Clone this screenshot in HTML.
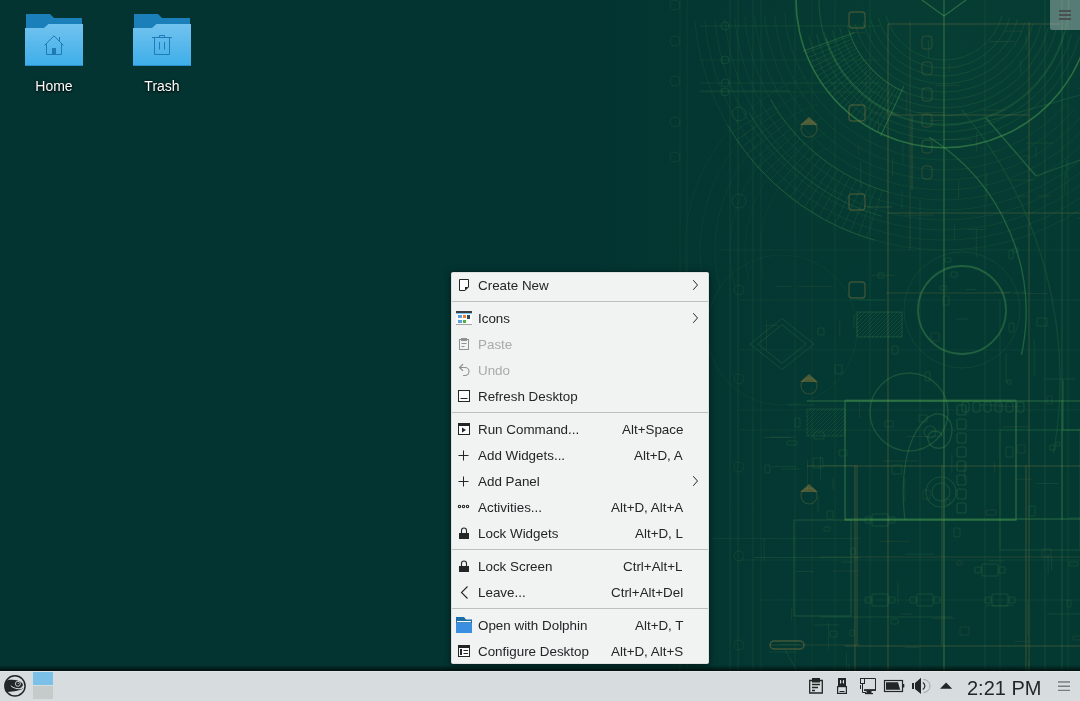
<!DOCTYPE html>
<html><head><meta charset="utf-8">
<style>
*{margin:0;padding:0;box-sizing:border-box}
html,body{width:1080px;height:701px;overflow:hidden;background:#033431;font-family:"Liberation Sans",sans-serif;-webkit-font-smoothing:antialiased}
.t,.k,.lbl,#clock{will-change:transform}
.abs{position:absolute;left:0;top:0}
.lbl{position:absolute;width:100px;text-align:center;color:#fcfcfc;font-size:14px;letter-spacing:0px;white-space:nowrap;text-shadow:0 1px 2px rgba(0,0,0,.95),0 0 3px rgba(0,0,0,.6)}
#menu{position:absolute;left:451px;top:272px;width:258px;height:392px;background:#f1f2f2;border-radius:2px;
 box-shadow:inset 0 0 0 1px rgba(0,0,0,.08),0 1px 7px rgba(0,0,0,.55),0 0 1px rgba(0,0,0,.4)}
.t,.k{position:absolute;font-size:13.4px;color:#232627;white-space:nowrap;line-height:16px}
.k{text-align:right}
.dis{color:#a8aaab}
.sep{position:absolute;left:1px;width:256px;height:1px;background:#bdbfc0}
#panel{position:absolute;left:0;top:671px;width:1080px;height:30px;background:#d7dcde}
#clock{position:absolute;left:967px;top:676.5px;font-size:20px;color:#232627;white-space:nowrap;line-height:22px}
</style></head><body>
<svg class="abs" width="1080" height="671" viewBox="0 0 1080 671">
 <defs>
  <linearGradient id="wg" x1="0" y1="0" x2="1" y2="0">
   <stop offset="0" stop-color="#053a33" stop-opacity="0"/>
   <stop offset="0.55" stop-color="#053a33" stop-opacity="0"/>
   <stop offset="0.75" stop-color="#043832" stop-opacity="1"/>
   <stop offset="1" stop-color="#043932" stop-opacity="1"/>
  </linearGradient>
  <radialGradient id="rg" cx="944" cy="60" r="240" gradientUnits="userSpaceOnUse">
   <stop offset="0" stop-color="#2a7a40" stop-opacity="0.08"/>
   <stop offset="1" stop-color="#2a7a40" stop-opacity="0"/>
  </radialGradient>
  <filter id="soft" x="0" y="0" width="1080" height="671" filterUnits="userSpaceOnUse"><feGaussianBlur stdDeviation="0.45"/></filter>
 </defs>
 <rect width="1080" height="671" fill="#033431"/>
 <rect width="1080" height="671" fill="url(#wg)"/>
 <rect width="1080" height="671" fill="url(#rg)"/>
<g filter="url(#soft)">
<path d="M1002.0 15.5 A60 60 0 0 1 886.0 15.5" fill="none" stroke="#52a552" stroke-opacity="0.15" stroke-width="1"/>
<path d="M1009.7 17.6 A68 68 0 0 1 878.3 17.6" fill="none" stroke="#52a552" stroke-opacity="0.15" stroke-width="1"/>
<path d="M1017.4 19.7 A76 76 0 0 1 870.6 19.7" fill="none" stroke="#52a552" stroke-opacity="0.15" stroke-width="1"/>
<path d="M1025.1 21.7 A84 84 0 0 1 862.9 21.7" fill="none" stroke="#52a552" stroke-opacity="0.15" stroke-width="1"/>
<path d="M1032.9 23.8 A92 92 0 0 1 855.1 23.8" fill="none" stroke="#52a552" stroke-opacity="0.15" stroke-width="1"/>
<path d="M1040.6 25.9 A100 100 0 0 1 847.4 25.9" fill="none" stroke="#52a552" stroke-opacity="0.15" stroke-width="1"/>
<path d="M1048.3 28.0 A108 108 0 0 1 839.7 28.0" fill="none" stroke="#52a552" stroke-opacity="0.15" stroke-width="1"/>
<path d="M1056.0 30.0 A116 116 0 0 1 832.0 30.0" fill="none" stroke="#52a552" stroke-opacity="0.15" stroke-width="1"/>
<path d="M1063.8 32.1 A124 124 0 0 1 824.2 32.1" fill="none" stroke="#52a552" stroke-opacity="0.15" stroke-width="1"/>
<path d="M1071.5 34.2 A132 132 0 0 1 816.5 34.2" fill="none" stroke="#52a552" stroke-opacity="0.15" stroke-width="1"/>
<path d="M1079.2 36.2 A140 140 0 0 1 808.8 36.2" fill="none" stroke="#52a552" stroke-opacity="0.15" stroke-width="1"/>
<path d="M1088.8 -30.8 A148 148 0 1 1 799.2 -30.8" fill="none" stroke="#52a552" stroke-opacity="0.48" stroke-width="1.6"/>
<path d="M1068.5 -10.9 A125 125 0 1 1 819.5 -10.9" fill="none" stroke="#52a552" stroke-opacity="0.22" stroke-width="1.1"/>
<path d="M1066.6 102.8 A160 160 0 0 1 784.6 13.9" fill="none" stroke="#52a552" stroke-opacity="0.1" stroke-width="1"/>
<path d="M1074.2 109.3 A170 170 0 0 1 774.6 14.8" fill="none" stroke="#52a552" stroke-opacity="0.1" stroke-width="1"/>
<path d="M1081.9 115.7 A180 180 0 0 1 764.7 15.7" fill="none" stroke="#52a552" stroke-opacity="0.1" stroke-width="1"/>
<path d="M1089.5 122.1 A190 190 0 0 1 754.7 16.6" fill="none" stroke="#52a552" stroke-opacity="0.1" stroke-width="1"/>
<path d="M1097.2 128.6 A200 200 0 0 1 744.8 17.4" fill="none" stroke="#52a552" stroke-opacity="0.1" stroke-width="1"/>
<path d="M1104.9 135.0 A210 210 0 0 1 734.8 18.3" fill="none" stroke="#52a552" stroke-opacity="0.1" stroke-width="1"/>
<path d="M1112.5 141.4 A220 220 0 0 1 724.8 19.2" fill="none" stroke="#52a552" stroke-opacity="0.1" stroke-width="1"/>
<path d="M1120.2 147.8 A230 230 0 0 1 714.9 20.0" fill="none" stroke="#52a552" stroke-opacity="0.1" stroke-width="1"/>
<path d="M1127.9 154.3 A240 240 0 0 1 704.9 20.9" fill="none" stroke="#52a552" stroke-opacity="0.1" stroke-width="1"/>
<path d="M1135.5 160.7 A250 250 0 0 1 695.0 21.8" fill="none" stroke="#52a552" stroke-opacity="0.1" stroke-width="1"/>
<line x1="901.7" y1="90.6" x2="881.5" y2="134.1" stroke="#52a552" stroke-opacity="0.16" stroke-width="1"/>
<line x1="898.6" y1="89.1" x2="876.8" y2="131.9" stroke="#52a552" stroke-opacity="0.16" stroke-width="1"/>
<line x1="895.5" y1="87.5" x2="872.2" y2="129.4" stroke="#52a552" stroke-opacity="0.16" stroke-width="1"/>
<line x1="892.5" y1="85.7" x2="867.8" y2="126.9" stroke="#52a552" stroke-opacity="0.16" stroke-width="1"/>
<line x1="889.5" y1="83.9" x2="863.4" y2="124.1" stroke="#52a552" stroke-opacity="0.16" stroke-width="1"/>
<line x1="886.6" y1="81.9" x2="859.1" y2="121.2" stroke="#52a552" stroke-opacity="0.16" stroke-width="1"/>
<line x1="883.8" y1="79.9" x2="854.9" y2="118.2" stroke="#52a552" stroke-opacity="0.16" stroke-width="1"/>
<line x1="881.1" y1="77.7" x2="850.9" y2="115.0" stroke="#52a552" stroke-opacity="0.16" stroke-width="1"/>
<line x1="878.4" y1="75.5" x2="846.9" y2="111.7" stroke="#52a552" stroke-opacity="0.16" stroke-width="1"/>
<line x1="875.8" y1="73.1" x2="843.1" y2="108.2" stroke="#52a552" stroke-opacity="0.16" stroke-width="1"/>
<line x1="873.3" y1="70.7" x2="839.3" y2="104.7" stroke="#52a552" stroke-opacity="0.16" stroke-width="1"/>
<line x1="870.9" y1="68.2" x2="835.8" y2="100.9" stroke="#52a552" stroke-opacity="0.16" stroke-width="1"/>
<line x1="868.5" y1="65.6" x2="832.3" y2="97.1" stroke="#52a552" stroke-opacity="0.16" stroke-width="1"/>
<line x1="866.3" y1="62.9" x2="829.0" y2="93.1" stroke="#52a552" stroke-opacity="0.16" stroke-width="1"/>
<line x1="864.1" y1="60.2" x2="825.8" y2="89.1" stroke="#52a552" stroke-opacity="0.16" stroke-width="1"/>
<line x1="862.1" y1="57.4" x2="822.8" y2="84.9" stroke="#52a552" stroke-opacity="0.16" stroke-width="1"/>
<line x1="860.1" y1="54.5" x2="819.9" y2="80.6" stroke="#52a552" stroke-opacity="0.16" stroke-width="1"/>
<line x1="858.3" y1="51.5" x2="817.1" y2="76.2" stroke="#52a552" stroke-opacity="0.16" stroke-width="1"/>
<line x1="856.5" y1="48.5" x2="814.6" y2="71.8" stroke="#52a552" stroke-opacity="0.16" stroke-width="1"/>
<line x1="854.9" y1="45.4" x2="812.1" y2="67.2" stroke="#52a552" stroke-opacity="0.16" stroke-width="1"/>
<line x1="853.4" y1="42.3" x2="809.9" y2="62.5" stroke="#52a552" stroke-opacity="0.16" stroke-width="1"/>
<line x1="851.9" y1="39.1" x2="807.8" y2="57.8" stroke="#52a552" stroke-opacity="0.16" stroke-width="1"/>
<line x1="850.6" y1="35.8" x2="805.8" y2="53.0" stroke="#52a552" stroke-opacity="0.16" stroke-width="1"/>
<path d="M904.9 92.1 A100 100 0 0 1 848.9 30.9" fill="none" stroke="#52a552" stroke-opacity="0.25" stroke-width="1.1"/>
<path d="M895.5 114.1 A124 124 0 0 1 826.1 38.3" fill="none" stroke="#52a552" stroke-opacity="0.25" stroke-width="1.1"/>
<line x1="903.9" y1="86.1" x2="880.6" y2="135.9" stroke="#52a552" stroke-opacity="0.3" stroke-width="1.1"/>
<line x1="854.7" y1="32.5" x2="803.0" y2="51.3" stroke="#52a552" stroke-opacity="0.3" stroke-width="1.1"/>
<line x1="882.2" y1="190.2" x2="866.7" y2="237.8" stroke="#52a552" stroke-opacity="0.12" stroke-width="1"/>
<line x1="875.6" y1="187.9" x2="858.5" y2="234.9" stroke="#52a552" stroke-opacity="0.12" stroke-width="1"/>
<line x1="869.1" y1="185.4" x2="850.3" y2="231.8" stroke="#52a552" stroke-opacity="0.12" stroke-width="1"/>
<line x1="862.7" y1="182.7" x2="842.3" y2="228.4" stroke="#52a552" stroke-opacity="0.12" stroke-width="1"/>
<line x1="856.3" y1="179.8" x2="834.4" y2="224.7" stroke="#52a552" stroke-opacity="0.12" stroke-width="1"/>
<line x1="850.1" y1="176.6" x2="826.6" y2="220.7" stroke="#52a552" stroke-opacity="0.12" stroke-width="1"/>
<line x1="844.0" y1="173.2" x2="819.0" y2="216.5" stroke="#52a552" stroke-opacity="0.12" stroke-width="1"/>
<line x1="838.0" y1="169.6" x2="811.5" y2="212.0" stroke="#52a552" stroke-opacity="0.12" stroke-width="1"/>
<line x1="832.2" y1="165.8" x2="804.2" y2="207.3" stroke="#52a552" stroke-opacity="0.12" stroke-width="1"/>
<line x1="826.4" y1="161.8" x2="797.1" y2="202.3" stroke="#52a552" stroke-opacity="0.12" stroke-width="1"/>
<line x1="820.9" y1="157.6" x2="790.1" y2="197.0" stroke="#52a552" stroke-opacity="0.12" stroke-width="1"/>
<line x1="815.4" y1="153.2" x2="783.3" y2="191.5" stroke="#52a552" stroke-opacity="0.12" stroke-width="1"/>
<line x1="810.2" y1="148.6" x2="776.7" y2="185.8" stroke="#52a552" stroke-opacity="0.12" stroke-width="1"/>
<line x1="805.1" y1="143.9" x2="770.3" y2="179.8" stroke="#52a552" stroke-opacity="0.12" stroke-width="1"/>
<line x1="800.1" y1="138.9" x2="764.2" y2="173.7" stroke="#52a552" stroke-opacity="0.12" stroke-width="1"/>
<line x1="795.4" y1="133.8" x2="758.2" y2="167.3" stroke="#52a552" stroke-opacity="0.12" stroke-width="1"/>
<line x1="790.8" y1="128.6" x2="752.5" y2="160.7" stroke="#52a552" stroke-opacity="0.12" stroke-width="1"/>
<line x1="786.4" y1="123.1" x2="747.0" y2="153.9" stroke="#52a552" stroke-opacity="0.12" stroke-width="1"/>
<line x1="782.2" y1="117.6" x2="741.7" y2="146.9" stroke="#52a552" stroke-opacity="0.12" stroke-width="1"/>
<line x1="778.2" y1="111.8" x2="736.7" y2="139.8" stroke="#52a552" stroke-opacity="0.12" stroke-width="1"/>
<line x1="774.4" y1="106.0" x2="732.0" y2="132.5" stroke="#52a552" stroke-opacity="0.12" stroke-width="1"/>
<path d="M888.9 192.3 A200 200 0 0 1 770.8 100.0" fill="none" stroke="#52a552" stroke-opacity="0.2" stroke-width="1.1"/>
<path d="M882.0 216.3 A225 225 0 0 1 749.1 112.5" fill="none" stroke="#52a552" stroke-opacity="0.2" stroke-width="1.1"/>
<path d="M875.1 240.3 A250 250 0 0 1 727.5 125.0" fill="none" stroke="#52a552" stroke-opacity="0.2" stroke-width="1.1"/>
<path d="M922 0 L944 16 L966 0" fill="none" stroke="#52a552" stroke-opacity="0.45" stroke-width="1.3"/>
<path d="M763.7 278.5 A110 110 0 0 1 832.4 146.6" fill="none" stroke="#3f8a4a" stroke-opacity="0.09" stroke-width="1"/>
<path d="M749.3 282.4 A125 125 0 0 1 827.2 132.5" fill="none" stroke="#3f8a4a" stroke-opacity="0.09" stroke-width="1"/>
<path d="M734.8 286.2 A140 140 0 0 1 822.1 118.4" fill="none" stroke="#3f8a4a" stroke-opacity="0.09" stroke-width="1"/>
<path d="M720.3 290.1 A155 155 0 0 1 817.0 104.3" fill="none" stroke="#3f8a4a" stroke-opacity="0.09" stroke-width="1"/>
<path d="M705.8 294.0 A170 170 0 0 1 811.9 90.3" fill="none" stroke="#3f8a4a" stroke-opacity="0.09" stroke-width="1"/>
<path d="M691.3 297.9 A185 185 0 0 1 806.7 76.2" fill="none" stroke="#3f8a4a" stroke-opacity="0.09" stroke-width="1"/>
<path d="M929.2 137.3 A206 206 0 0 1 1021.5 354.8" fill="none" stroke="#52a552" stroke-opacity="0.38" stroke-width="1.3"/>
<path d="M961.7 110.0 A420 420 0 0 1 1053.6 452.9" fill="none" stroke="#52a552" stroke-opacity="0.15" stroke-width="1.2"/>
<line x1="888.0" y1="24.0" x2="888.0" y2="671.0" stroke="#8f7d3d" stroke-opacity="0.35" stroke-width="1.2"/>
<line x1="944.0" y1="0.0" x2="944.0" y2="671.0" stroke="#52a552" stroke-opacity="0.42" stroke-width="1.3"/>
<line x1="1029.0" y1="22.0" x2="1029.0" y2="671.0" stroke="#8f7d3d" stroke-opacity="0.3" stroke-width="1.2"/>
<line x1="912.0" y1="115.0" x2="912.0" y2="190.0" stroke="#8f7d3d" stroke-opacity="0.3" stroke-width="1"/>
<line x1="855.0" y1="465.0" x2="855.0" y2="671.0" stroke="#8f7d3d" stroke-opacity="0.35" stroke-width="1.2"/>
<line x1="1026.0" y1="465.0" x2="1026.0" y2="671.0" stroke="#8f7d3d" stroke-opacity="0.32" stroke-width="1.2"/>
<line x1="1062.0" y1="400.0" x2="1062.0" y2="520.0" stroke="#52a552" stroke-opacity="0.3" stroke-width="1"/>
<line x1="680.0" y1="0.0" x2="680.0" y2="671.0" stroke="#52a552" stroke-opacity="0.1" stroke-width="1"/>
<line x1="687.0" y1="0.0" x2="687.0" y2="671.0" stroke="#52a552" stroke-opacity="0.08" stroke-width="1"/>
<line x1="730.0" y1="0.0" x2="730.0" y2="671.0" stroke="#52a552" stroke-opacity="0.12" stroke-width="1"/>
<line x1="738.0" y1="0.0" x2="738.0" y2="671.0" stroke="#52a552" stroke-opacity="0.12" stroke-width="1"/>
<line x1="753.0" y1="0.0" x2="753.0" y2="671.0" stroke="#52a552" stroke-opacity="0.12" stroke-width="1"/>
<line x1="761.0" y1="0.0" x2="761.0" y2="671.0" stroke="#52a552" stroke-opacity="0.1" stroke-width="1"/>
<line x1="795.0" y1="0.0" x2="795.0" y2="671.0" stroke="#52a552" stroke-opacity="0.1" stroke-width="1"/>
<line x1="835.0" y1="0.0" x2="835.0" y2="671.0" stroke="#52a552" stroke-opacity="0.1" stroke-width="1"/>
<line x1="870.0" y1="0.0" x2="870.0" y2="671.0" stroke="#52a552" stroke-opacity="0.12" stroke-width="1"/>
<line x1="985.0" y1="0.0" x2="985.0" y2="671.0" stroke="#52a552" stroke-opacity="0.12" stroke-width="1"/>
<line x1="1045.0" y1="0.0" x2="1045.0" y2="671.0" stroke="#52a552" stroke-opacity="0.15" stroke-width="1"/>
<line x1="1068.0" y1="0.0" x2="1068.0" y2="671.0" stroke="#52a552" stroke-opacity="0.12" stroke-width="1"/>
<line x1="920.0" y1="200.0" x2="920.0" y2="671.0" stroke="#52a552" stroke-opacity="0.12" stroke-width="1"/>
<line x1="1000.0" y1="300.0" x2="1000.0" y2="671.0" stroke="#52a552" stroke-opacity="0.12" stroke-width="1"/>
<line x1="812.0" y1="0.0" x2="812.0" y2="671.0" stroke="#8f7d3d" stroke-opacity="0.08" stroke-width="1"/>
<line x1="888.0" y1="24.0" x2="1060.0" y2="24.0" stroke="#8f7d3d" stroke-opacity="0.35" stroke-width="1.2"/>
<line x1="888.0" y1="115.0" x2="1029.0" y2="115.0" stroke="#8f7d3d" stroke-opacity="0.32" stroke-width="1.2"/>
<line x1="888.0" y1="213.0" x2="1080.0" y2="213.0" stroke="#8f7d3d" stroke-opacity="0.32" stroke-width="1.2"/>
<line x1="807.0" y1="466.0" x2="1080.0" y2="466.0" stroke="#8f7d3d" stroke-opacity="0.35" stroke-width="1.2"/>
<line x1="845.0" y1="646.0" x2="1080.0" y2="646.0" stroke="#8f7d3d" stroke-opacity="0.35" stroke-width="1.2"/>
<line x1="845.0" y1="400.0" x2="1016.0" y2="400.0" stroke="#52a552" stroke-opacity="0.35" stroke-width="1.2"/>
<line x1="845.0" y1="520.0" x2="1016.0" y2="520.0" stroke="#52a552" stroke-opacity="0.3" stroke-width="1.2"/>
<line x1="700.0" y1="26.0" x2="880.0" y2="26.0" stroke="#52a552" stroke-opacity="0.12" stroke-width="1"/>
<line x1="700.0" y1="60.0" x2="880.0" y2="60.0" stroke="#52a552" stroke-opacity="0.1" stroke-width="1"/>
<line x1="700.0" y1="83.0" x2="880.0" y2="83.0" stroke="#52a552" stroke-opacity="0.12" stroke-width="1"/>
<line x1="700.0" y1="92.0" x2="880.0" y2="92.0" stroke="#52a552" stroke-opacity="0.1" stroke-width="1"/>
<line x1="740.0" y1="300.0" x2="1080.0" y2="300.0" stroke="#52a552" stroke-opacity="0.1" stroke-width="1"/>
<line x1="740.0" y1="350.0" x2="1080.0" y2="350.0" stroke="#52a552" stroke-opacity="0.08" stroke-width="1"/>
<line x1="740.0" y1="560.0" x2="1080.0" y2="560.0" stroke="#52a552" stroke-opacity="0.1" stroke-width="1"/>
<line x1="760.0" y1="600.0" x2="1080.0" y2="600.0" stroke="#52a552" stroke-opacity="0.1" stroke-width="1"/>
<line x1="740.0" y1="430.0" x2="1080.0" y2="430.0" stroke="#52a552" stroke-opacity="0.1" stroke-width="1"/>
<line x1="720.0" y1="250.0" x2="1080.0" y2="250.0" stroke="#52a552" stroke-opacity="0.08" stroke-width="1"/>
<line x1="740.0" y1="410.0" x2="1080.0" y2="410.0" stroke="#52a552" stroke-opacity="0.08" stroke-width="1"/>
<rect x="845" y="401" width="171" height="119" rx="0" fill="none" stroke="#52a552" stroke-opacity="0.4" stroke-width="1.4"/>
<rect x="794" y="520" width="57" height="96" rx="0" fill="none" stroke="#52a552" stroke-opacity="0.25" stroke-width="1.1"/>
<circle cx="962" cy="310" r="44" fill="none" stroke="#52a552" stroke-opacity="0.35" stroke-width="1.8"/>
<circle cx="962" cy="310" r="58" fill="none" stroke="#52a552" stroke-opacity="0.12" stroke-width="1"/>
<circle cx="675" cy="5" r="5" fill="none" stroke="#52a552" stroke-opacity="0.13" stroke-width="1"/>
<circle cx="675" cy="41" r="5" fill="none" stroke="#52a552" stroke-opacity="0.13" stroke-width="1"/>
<circle cx="675" cy="81" r="5" fill="none" stroke="#52a552" stroke-opacity="0.13" stroke-width="1"/>
<circle cx="675" cy="122" r="5" fill="none" stroke="#52a552" stroke-opacity="0.13" stroke-width="1"/>
<circle cx="675" cy="157" r="5" fill="none" stroke="#52a552" stroke-opacity="0.13" stroke-width="1"/>
<circle cx="739" cy="290" r="5" fill="none" stroke="#52a552" stroke-opacity="0.13" stroke-width="1"/>
<circle cx="739" cy="379" r="5" fill="none" stroke="#52a552" stroke-opacity="0.13" stroke-width="1"/>
<circle cx="739" cy="467" r="5" fill="none" stroke="#52a552" stroke-opacity="0.13" stroke-width="1"/>
<circle cx="739" cy="556" r="5" fill="none" stroke="#52a552" stroke-opacity="0.13" stroke-width="1"/>
<circle cx="739" cy="645" r="5" fill="none" stroke="#52a552" stroke-opacity="0.13" stroke-width="1"/>
<circle cx="725" cy="26" r="4" fill="none" stroke="#52a552" stroke-opacity="0.16" stroke-width="1"/>
<circle cx="725" cy="60" r="4" fill="none" stroke="#52a552" stroke-opacity="0.16" stroke-width="1"/>
<circle cx="725" cy="83" r="4" fill="none" stroke="#52a552" stroke-opacity="0.16" stroke-width="1"/>
<circle cx="725" cy="92" r="4" fill="none" stroke="#52a552" stroke-opacity="0.16" stroke-width="1"/>
<circle cx="739" cy="114" r="7" fill="none" stroke="#52a552" stroke-opacity="0.16" stroke-width="1"/>
<rect x="849" y="12" width="16" height="16" rx="3" fill="none" stroke="#8f7d3d" stroke-opacity="0.4" stroke-width="1.3"/>
<rect x="849" y="105" width="16" height="16" rx="3" fill="none" stroke="#8f7d3d" stroke-opacity="0.4" stroke-width="1.3"/>
<rect x="849" y="194" width="16" height="16" rx="3" fill="none" stroke="#8f7d3d" stroke-opacity="0.4" stroke-width="1.3"/>
<rect x="849" y="282" width="16" height="16" rx="3" fill="none" stroke="#8f7d3d" stroke-opacity="0.4" stroke-width="1.3"/>
<line x1="986.0" y1="118.0" x2="1036.0" y2="176.0" stroke="#52a552" stroke-opacity="0.35" stroke-width="1.4"/>
<line x1="1036.0" y1="176.0" x2="1080.0" y2="160.0" stroke="#52a552" stroke-opacity="0.25" stroke-width="1.2"/>
<line x1="1080.0" y1="95.0" x2="985.0" y2="122.0" stroke="#52a552" stroke-opacity="0.2" stroke-width="1"/>
<path d="M800 125 L809 117 L818 125 Z" fill="#8f7d3d" fill-opacity="0.5"/>
<circle cx="809" cy="129" r="8" fill="none" stroke="#8f7d3d" stroke-opacity="0.3" stroke-width="1.1"/>
<path d="M800 382 L809 374 L818 382 Z" fill="#8f7d3d" fill-opacity="0.5"/>
<circle cx="809" cy="386" r="8" fill="none" stroke="#8f7d3d" stroke-opacity="0.3" stroke-width="1.1"/>
<path d="M800 492 L809 484 L818 492 Z" fill="#8f7d3d" fill-opacity="0.5"/>
<circle cx="809" cy="496" r="8" fill="none" stroke="#8f7d3d" stroke-opacity="0.3" stroke-width="1.1"/>
<rect x="922" y="36" width="10" height="13" rx="3" fill="none" stroke="#8f7d3d" stroke-opacity="0.28" stroke-width="1"/>
<rect x="922" y="62" width="10" height="13" rx="3" fill="none" stroke="#8f7d3d" stroke-opacity="0.28" stroke-width="1"/>
<rect x="922" y="88" width="10" height="13" rx="3" fill="none" stroke="#8f7d3d" stroke-opacity="0.28" stroke-width="1"/>
<rect x="922" y="114" width="10" height="13" rx="3" fill="none" stroke="#8f7d3d" stroke-opacity="0.28" stroke-width="1"/>
<rect x="922" y="140" width="10" height="13" rx="3" fill="none" stroke="#8f7d3d" stroke-opacity="0.28" stroke-width="1"/>
<rect x="922" y="166" width="10" height="13" rx="3" fill="none" stroke="#8f7d3d" stroke-opacity="0.28" stroke-width="1"/>
<line x1="910.0" y1="21.0" x2="910.0" y2="250.0" stroke="#8f7d3d" stroke-opacity="0.2" stroke-width="1"/>
<line x1="700.0" y1="91.0" x2="790.0" y2="91.0" stroke="#52a552" stroke-opacity="0.15" stroke-width="1"/>
<circle cx="739" cy="201" r="7" fill="none" stroke="#52a552" stroke-opacity="0.15" stroke-width="1"/>
<line x1="904.8" y1="477.9" x2="904.8" y2="501.9" stroke="#52a552" stroke-opacity="0.14" stroke-width="1"/>
<rect x="923" y="490" width="7" height="9" rx="1" fill="none" stroke="#8f7d3d" stroke-opacity="0.16" stroke-width="1"/>
<line x1="956.5" y1="319.1" x2="968.5" y2="319.1" stroke="#52a552" stroke-opacity="0.14" stroke-width="1"/>
<line x1="932.4" y1="618.4" x2="954.4" y2="618.4" stroke="#8f7d3d" stroke-opacity="0.14" stroke-width="1"/>
<line x1="1068.7" y1="517.9" x2="1097.7" y2="517.9" stroke="#52a552" stroke-opacity="0.14" stroke-width="1"/>
<rect x="765" y="465" width="5" height="8" rx="1" fill="none" stroke="#52a552" stroke-opacity="0.16" stroke-width="1"/>
<line x1="769.6" y1="437.2" x2="795.6" y2="437.2" stroke="#52a552" stroke-opacity="0.14" stroke-width="1"/>
<rect x="835" y="365" width="7" height="9" rx="1" fill="none" stroke="#52a552" stroke-opacity="0.16" stroke-width="1"/>
<line x1="849.0" y1="664.0" x2="849.0" y2="696.0" stroke="#52a552" stroke-opacity="0.14" stroke-width="1"/>
<line x1="841.3" y1="562.1" x2="853.3" y2="562.1" stroke="#52a552" stroke-opacity="0.14" stroke-width="1"/>
<rect x="940" y="286" width="7" height="4" rx="1" fill="none" stroke="#52a552" stroke-opacity="0.16" stroke-width="1"/>
<rect x="1067" y="600" width="4" height="7" rx="1" fill="none" stroke="#52a552" stroke-opacity="0.16" stroke-width="1"/>
<line x1="880.1" y1="541.3" x2="910.1" y2="541.3" stroke="#8f7d3d" stroke-opacity="0.14" stroke-width="1"/>
<rect x="824" y="527" width="6" height="4" rx="1" fill="none" stroke="#52a552" stroke-opacity="0.16" stroke-width="1"/>
<rect x="1069" y="562" width="9" height="4" rx="1" fill="none" stroke="#52a552" stroke-opacity="0.16" stroke-width="1"/>
<line x1="763.5" y1="437.6" x2="790.5" y2="437.6" stroke="#8f7d3d" stroke-opacity="0.14" stroke-width="1"/>
<line x1="820.3" y1="456.3" x2="820.3" y2="479.3" stroke="#52a552" stroke-opacity="0.14" stroke-width="1"/>
<line x1="966.0" y1="289.5" x2="976.0" y2="289.5" stroke="#52a552" stroke-opacity="0.14" stroke-width="1"/>
<line x1="846.3" y1="652.6" x2="846.3" y2="690.6" stroke="#52a552" stroke-opacity="0.14" stroke-width="1"/>
<line x1="766.3" y1="319.6" x2="766.3" y2="349.6" stroke="#8f7d3d" stroke-opacity="0.14" stroke-width="1"/>
<rect x="945" y="258" width="6" height="4" rx="1" fill="none" stroke="#52a552" stroke-opacity="0.16" stroke-width="1"/>
<rect x="1007" y="380" width="4" height="4" rx="1" fill="none" stroke="#52a552" stroke-opacity="0.16" stroke-width="1"/>
<rect x="827" y="511" width="6" height="8" rx="1" fill="none" stroke="#52a552" stroke-opacity="0.16" stroke-width="1"/>
<line x1="905.0" y1="647.6" x2="919.0" y2="647.6" stroke="#8f7d3d" stroke-opacity="0.14" stroke-width="1"/>
<rect x="1037" y="318" width="10" height="8" rx="1" fill="none" stroke="#52a552" stroke-opacity="0.16" stroke-width="1"/>
<line x1="839.8" y1="320.7" x2="839.8" y2="336.7" stroke="#8f7d3d" stroke-opacity="0.14" stroke-width="1"/>
<line x1="979.8" y1="405.0" x2="1002.8" y2="405.0" stroke="#52a552" stroke-opacity="0.14" stroke-width="1"/>
<line x1="775.2" y1="286.3" x2="792.2" y2="286.3" stroke="#52a552" stroke-opacity="0.14" stroke-width="1"/>
<line x1="996.7" y1="406.4" x2="1021.7" y2="406.4" stroke="#8f7d3d" stroke-opacity="0.14" stroke-width="1"/>
<line x1="853.9" y1="314.6" x2="853.9" y2="328.6" stroke="#52a552" stroke-opacity="0.14" stroke-width="1"/>
<line x1="833.1" y1="477.7" x2="833.1" y2="489.7" stroke="#8f7d3d" stroke-opacity="0.14" stroke-width="1"/>
<rect x="850" y="630" width="4" height="6" rx="1" fill="none" stroke="#52a552" stroke-opacity="0.16" stroke-width="1"/>
<rect x="892" y="346" width="6" height="8" rx="1" fill="none" stroke="#52a552" stroke-opacity="0.16" stroke-width="1"/>
<rect x="943" y="296" width="6" height="9" rx="1" fill="none" stroke="#52a552" stroke-opacity="0.16" stroke-width="1"/>
<line x1="994.5" y1="461.8" x2="994.5" y2="472.8" stroke="#8f7d3d" stroke-opacity="0.14" stroke-width="1"/>
<rect x="1056" y="442" width="4" height="4" rx="1" fill="none" stroke="#52a552" stroke-opacity="0.16" stroke-width="1"/>
<rect x="951" y="272" width="6" height="5" rx="1" fill="none" stroke="#52a552" stroke-opacity="0.16" stroke-width="1"/>
<line x1="1079.8" y1="272.0" x2="1090.8" y2="272.0" stroke="#8f7d3d" stroke-opacity="0.14" stroke-width="1"/>
<line x1="1048.1" y1="553.3" x2="1048.1" y2="574.3" stroke="#52a552" stroke-opacity="0.14" stroke-width="1"/>
<rect x="787" y="441" width="10" height="4" rx="1" fill="none" stroke="#52a552" stroke-opacity="0.16" stroke-width="1"/>
<line x1="1036.3" y1="483.4" x2="1058.3" y2="483.4" stroke="#52a552" stroke-opacity="0.14" stroke-width="1"/>
<rect x="946" y="499" width="4" height="6" rx="1" fill="none" stroke="#8f7d3d" stroke-opacity="0.16" stroke-width="1"/>
<rect x="1042" y="549" width="9" height="8" rx="1" fill="none" stroke="#8f7d3d" stroke-opacity="0.16" stroke-width="1"/>
<line x1="906.5" y1="436.6" x2="940.5" y2="436.6" stroke="#8f7d3d" stroke-opacity="0.14" stroke-width="1"/>
<rect x="925" y="372" width="5" height="9" rx="1" fill="none" stroke="#52a552" stroke-opacity="0.16" stroke-width="1"/>
<line x1="796.1" y1="571.5" x2="814.1" y2="571.5" stroke="#52a552" stroke-opacity="0.14" stroke-width="1"/>
<rect x="1047" y="396" width="5" height="8" rx="1" fill="none" stroke="#8f7d3d" stroke-opacity="0.16" stroke-width="1"/>
<line x1="814.3" y1="624.9" x2="839.3" y2="624.9" stroke="#52a552" stroke-opacity="0.14" stroke-width="1"/>
<line x1="1045.4" y1="379.0" x2="1075.4" y2="379.0" stroke="#52a552" stroke-opacity="0.14" stroke-width="1"/>
<line x1="897.9" y1="582.5" x2="897.9" y2="604.5" stroke="#52a552" stroke-opacity="0.14" stroke-width="1"/>
<rect x="830" y="631" width="7" height="6" rx="1" fill="none" stroke="#52a552" stroke-opacity="0.16" stroke-width="1"/>
<line x1="1027.9" y1="600.7" x2="1027.9" y2="636.7" stroke="#52a552" stroke-opacity="0.14" stroke-width="1"/>
<rect x="814" y="432" width="10" height="7" rx="1" fill="none" stroke="#52a552" stroke-opacity="0.16" stroke-width="1"/>
<line x1="882.4" y1="461.0" x2="918.4" y2="461.0" stroke="#8f7d3d" stroke-opacity="0.14" stroke-width="1"/>
<rect x="1029" y="506" width="6" height="10" rx="1" fill="none" stroke="#52a552" stroke-opacity="0.16" stroke-width="1"/>
<rect x="954" y="528" width="6" height="9" rx="1" fill="none" stroke="#52a552" stroke-opacity="0.16" stroke-width="1"/>
<rect x="1013" y="248" width="5" height="4" rx="1" fill="none" stroke="#52a552" stroke-opacity="0.16" stroke-width="1"/>
<line x1="1006.1" y1="353.2" x2="1006.1" y2="383.2" stroke="#52a552" stroke-opacity="0.14" stroke-width="1"/>
<line x1="796.9" y1="286.3" x2="831.9" y2="286.3" stroke="#8f7d3d" stroke-opacity="0.14" stroke-width="1"/>
<rect x="878" y="273" width="6" height="5" rx="1" fill="none" stroke="#52a552" stroke-opacity="0.16" stroke-width="1"/>
<line x1="988.6" y1="560.9" x2="1003.6" y2="560.9" stroke="#52a552" stroke-opacity="0.14" stroke-width="1"/>
<line x1="832.5" y1="570.9" x2="858.5" y2="570.9" stroke="#8f7d3d" stroke-opacity="0.14" stroke-width="1"/>
<rect x="957" y="561" width="5" height="4" rx="1" fill="none" stroke="#8f7d3d" stroke-opacity="0.16" stroke-width="1"/>
<rect x="891" y="619" width="7" height="5" rx="1" fill="none" stroke="#52a552" stroke-opacity="0.16" stroke-width="1"/>
<rect x="960" y="627" width="9" height="8" rx="1" fill="none" stroke="#8f7d3d" stroke-opacity="0.16" stroke-width="1"/>
<line x1="1015.0" y1="641.3" x2="1031.0" y2="641.3" stroke="#8f7d3d" stroke-opacity="0.14" stroke-width="1"/>
<line x1="791.7" y1="608.1" x2="791.7" y2="621.1" stroke="#8f7d3d" stroke-opacity="0.14" stroke-width="1"/>
<line x1="828.3" y1="622.5" x2="828.3" y2="649.5" stroke="#52a552" stroke-opacity="0.14" stroke-width="1"/>
<rect x="1073" y="636" width="10" height="4" rx="1" fill="none" stroke="#8f7d3d" stroke-opacity="0.16" stroke-width="1"/>
<line x1="871.5" y1="275.2" x2="894.5" y2="275.2" stroke="#8f7d3d" stroke-opacity="0.14" stroke-width="1"/>
<rect x="1006" y="447" width="7" height="10" rx="1" fill="none" stroke="#52a552" stroke-opacity="0.16" stroke-width="1"/>
<line x1="771.2" y1="466.6" x2="796.2" y2="466.6" stroke="#52a552" stroke-opacity="0.14" stroke-width="1"/>
<line x1="807.6" y1="459.5" x2="807.6" y2="491.5" stroke="#8f7d3d" stroke-opacity="0.14" stroke-width="1"/>
<line x1="900.9" y1="614.0" x2="912.9" y2="614.0" stroke="#8f7d3d" stroke-opacity="0.14" stroke-width="1"/>
<line x1="1002.5" y1="426.8" x2="1029.5" y2="426.8" stroke="#8f7d3d" stroke-opacity="0.14" stroke-width="1"/>
<line x1="964.4" y1="462.2" x2="964.4" y2="480.2" stroke="#8f7d3d" stroke-opacity="0.14" stroke-width="1"/>
<line x1="859.7" y1="402.0" x2="859.7" y2="418.0" stroke="#8f7d3d" stroke-opacity="0.14" stroke-width="1"/>
<line x1="857.4" y1="300.0" x2="885.4" y2="300.0" stroke="#52a552" stroke-opacity="0.14" stroke-width="1"/>
<rect x="919" y="415" width="8" height="7" rx="1" fill="none" stroke="#52a552" stroke-opacity="0.16" stroke-width="1"/>
<line x1="768.9" y1="652.0" x2="795.9" y2="652.0" stroke="#52a552" stroke-opacity="0.14" stroke-width="1"/>
<line x1="1016.3" y1="479.2" x2="1031.3" y2="479.2" stroke="#8f7d3d" stroke-opacity="0.14" stroke-width="1"/>
<line x1="781.1" y1="469.0" x2="799.1" y2="469.0" stroke="#52a552" stroke-opacity="0.14" stroke-width="1"/>
<rect x="839" y="450" width="8" height="6" rx="1" fill="none" stroke="#52a552" stroke-opacity="0.16" stroke-width="1"/>
<rect x="795" y="418" width="5" height="9" rx="1" fill="none" stroke="#52a552" stroke-opacity="0.16" stroke-width="1"/>
<rect x="1009" y="250" width="4" height="9" rx="1" fill="none" stroke="#52a552" stroke-opacity="0.16" stroke-width="1"/>
<rect x="851" y="548" width="4" height="7" rx="1" fill="none" stroke="#52a552" stroke-opacity="0.16" stroke-width="1"/>
<line x1="993.9" y1="292.2" x2="1025.9" y2="292.2" stroke="#52a552" stroke-opacity="0.14" stroke-width="1"/>
<line x1="823.3" y1="465.4" x2="853.3" y2="465.4" stroke="#52a552" stroke-opacity="0.14" stroke-width="1"/>
<rect x="892" y="465" width="10" height="9" rx="1" fill="none" stroke="#52a552" stroke-opacity="0.16" stroke-width="1"/>
<rect x="931" y="333" width="8" height="8" rx="1" fill="none" stroke="#8f7d3d" stroke-opacity="0.16" stroke-width="1"/>
<line x1="1034.2" y1="338.9" x2="1034.2" y2="376.9" stroke="#52a552" stroke-opacity="0.14" stroke-width="1"/>
<line x1="818.0" y1="496.3" x2="818.0" y2="512.3" stroke="#52a552" stroke-opacity="0.14" stroke-width="1"/>
<rect x="1009" y="323" width="5" height="9" rx="1" fill="none" stroke="#52a552" stroke-opacity="0.16" stroke-width="1"/>
<line x1="788.2" y1="404.9" x2="815.2" y2="404.9" stroke="#52a552" stroke-opacity="0.14" stroke-width="1"/>
<line x1="1012.8" y1="293.6" x2="1047.8" y2="293.6" stroke="#8f7d3d" stroke-opacity="0.14" stroke-width="1"/>
<line x1="765.7" y1="325.4" x2="778.7" y2="325.4" stroke="#52a552" stroke-opacity="0.14" stroke-width="1"/>
<rect x="986" y="510" width="10" height="5" rx="1" fill="none" stroke="#8f7d3d" stroke-opacity="0.16" stroke-width="1"/>
<rect x="1017" y="445" width="8" height="8" rx="1" fill="none" stroke="#8f7d3d" stroke-opacity="0.16" stroke-width="1"/>
<rect x="1050" y="445" width="5" height="5" rx="1" fill="none" stroke="#52a552" stroke-opacity="0.16" stroke-width="1"/>
<line x1="1028.9" y1="660.9" x2="1028.9" y2="688.9" stroke="#52a552" stroke-opacity="0.14" stroke-width="1"/>
<line x1="779.8" y1="644.4" x2="799.8" y2="644.4" stroke="#52a552" stroke-opacity="0.14" stroke-width="1"/>
<rect x="885" y="421" width="8" height="6" rx="1" fill="none" stroke="#52a552" stroke-opacity="0.16" stroke-width="1"/>
<line x1="764.2" y1="537.9" x2="764.2" y2="560.9" stroke="#52a552" stroke-opacity="0.14" stroke-width="1"/>
<line x1="905.3" y1="554.2" x2="934.3" y2="554.2" stroke="#52a552" stroke-opacity="0.14" stroke-width="1"/>
<rect x="813" y="458" width="10" height="10" rx="1" fill="none" stroke="#52a552" stroke-opacity="0.16" stroke-width="1"/>
<line x1="985.5" y1="605.8" x2="1013.5" y2="605.8" stroke="#52a552" stroke-opacity="0.14" stroke-width="1"/>
<line x1="951.9" y1="454.3" x2="951.9" y2="472.3" stroke="#52a552" stroke-opacity="0.14" stroke-width="1"/>
<line x1="1051.6" y1="556.4" x2="1051.6" y2="570.4" stroke="#52a552" stroke-opacity="0.14" stroke-width="1"/>
<line x1="1046.9" y1="613.9" x2="1080.9" y2="613.9" stroke="#52a552" stroke-opacity="0.14" stroke-width="1"/>
<rect x="818" y="328" width="6" height="7" rx="1" fill="none" stroke="#52a552" stroke-opacity="0.16" stroke-width="1"/>
<line x1="864.2" y1="206.5" x2="892.2" y2="206.5" stroke="#52a552" stroke-opacity="0.13" stroke-width="1"/>
<line x1="1066.7" y1="159.9" x2="1066.7" y2="177.9" stroke="#52a552" stroke-opacity="0.13" stroke-width="1"/>
<line x1="976.7" y1="131.9" x2="976.7" y2="151.9" stroke="#8f7d3d" stroke-opacity="0.13" stroke-width="1"/>
<line x1="1008.3" y1="180.0" x2="1034.3" y2="180.0" stroke="#52a552" stroke-opacity="0.13" stroke-width="1"/>
<line x1="865.9" y1="69.8" x2="865.9" y2="91.8" stroke="#8f7d3d" stroke-opacity="0.13" stroke-width="1"/>
<line x1="1022.7" y1="156.1" x2="1030.7" y2="156.1" stroke="#52a552" stroke-opacity="0.13" stroke-width="1"/>
<line x1="906.2" y1="91.6" x2="906.2" y2="116.6" stroke="#8f7d3d" stroke-opacity="0.13" stroke-width="1"/>
<line x1="976.3" y1="229.0" x2="976.3" y2="257.0" stroke="#8f7d3d" stroke-opacity="0.13" stroke-width="1"/>
<line x1="858.3" y1="145.5" x2="858.3" y2="154.5" stroke="#8f7d3d" stroke-opacity="0.13" stroke-width="1"/>
<line x1="878.4" y1="119.1" x2="878.4" y2="132.1" stroke="#8f7d3d" stroke-opacity="0.13" stroke-width="1"/>
<line x1="983.2" y1="110.2" x2="1006.2" y2="110.2" stroke="#8f7d3d" stroke-opacity="0.13" stroke-width="1"/>
<line x1="935.7" y1="85.6" x2="959.7" y2="85.6" stroke="#8f7d3d" stroke-opacity="0.13" stroke-width="1"/>
<line x1="904.7" y1="215.2" x2="933.7" y2="215.2" stroke="#8f7d3d" stroke-opacity="0.13" stroke-width="1"/>
<line x1="1025.4" y1="143.0" x2="1053.4" y2="143.0" stroke="#52a552" stroke-opacity="0.13" stroke-width="1"/>
<line x1="1004.2" y1="31.1" x2="1022.2" y2="31.1" stroke="#8f7d3d" stroke-opacity="0.13" stroke-width="1"/>
<line x1="1077.3" y1="218.3" x2="1087.3" y2="218.3" stroke="#52a552" stroke-opacity="0.13" stroke-width="1"/>
<line x1="954.6" y1="224.4" x2="954.6" y2="239.4" stroke="#52a552" stroke-opacity="0.13" stroke-width="1"/>
<line x1="1064.9" y1="171.8" x2="1064.9" y2="193.8" stroke="#52a552" stroke-opacity="0.13" stroke-width="1"/>
<line x1="1036.0" y1="146.8" x2="1036.0" y2="157.8" stroke="#52a552" stroke-opacity="0.13" stroke-width="1"/>
<line x1="949.4" y1="62.8" x2="949.4" y2="71.8" stroke="#8f7d3d" stroke-opacity="0.13" stroke-width="1"/>
<line x1="869.8" y1="113.0" x2="898.8" y2="113.0" stroke="#8f7d3d" stroke-opacity="0.13" stroke-width="1"/>
<line x1="902.9" y1="142.3" x2="902.9" y2="163.3" stroke="#8f7d3d" stroke-opacity="0.13" stroke-width="1"/>
<line x1="967.4" y1="229.5" x2="984.4" y2="229.5" stroke="#52a552" stroke-opacity="0.13" stroke-width="1"/>
<line x1="867.3" y1="207.5" x2="891.3" y2="207.5" stroke="#8f7d3d" stroke-opacity="0.13" stroke-width="1"/>
<line x1="986.4" y1="172.3" x2="986.4" y2="202.3" stroke="#52a552" stroke-opacity="0.13" stroke-width="1"/>
<line x1="1020.8" y1="59.9" x2="1020.8" y2="74.9" stroke="#52a552" stroke-opacity="0.13" stroke-width="1"/>
<line x1="849.5" y1="32.8" x2="865.5" y2="32.8" stroke="#8f7d3d" stroke-opacity="0.13" stroke-width="1"/>
<line x1="989.6" y1="41.5" x2="1014.6" y2="41.5" stroke="#8f7d3d" stroke-opacity="0.13" stroke-width="1"/>
<line x1="860.7" y1="162.0" x2="860.7" y2="187.0" stroke="#52a552" stroke-opacity="0.13" stroke-width="1"/>
<line x1="929.6" y1="120.5" x2="943.6" y2="120.5" stroke="#8f7d3d" stroke-opacity="0.13" stroke-width="1"/>
<line x1="1018.8" y1="196.1" x2="1028.8" y2="196.1" stroke="#52a552" stroke-opacity="0.13" stroke-width="1"/>
<line x1="1037.3" y1="196.0" x2="1051.3" y2="196.0" stroke="#8f7d3d" stroke-opacity="0.13" stroke-width="1"/>
<line x1="901.9" y1="190.1" x2="901.9" y2="209.1" stroke="#52a552" stroke-opacity="0.13" stroke-width="1"/>
<line x1="1077.4" y1="88.3" x2="1102.4" y2="88.3" stroke="#52a552" stroke-opacity="0.13" stroke-width="1"/>
<line x1="928.6" y1="40.4" x2="928.6" y2="58.4" stroke="#52a552" stroke-opacity="0.13" stroke-width="1"/>
<line x1="943.7" y1="139.3" x2="972.7" y2="139.3" stroke="#8f7d3d" stroke-opacity="0.13" stroke-width="1"/>
<line x1="1026.1" y1="36.0" x2="1026.1" y2="50.0" stroke="#52a552" stroke-opacity="0.13" stroke-width="1"/>
<line x1="958.7" y1="180.5" x2="958.7" y2="198.5" stroke="#8f7d3d" stroke-opacity="0.13" stroke-width="1"/>
<line x1="892.5" y1="158.0" x2="892.5" y2="176.0" stroke="#8f7d3d" stroke-opacity="0.13" stroke-width="1"/>
<line x1="917.4" y1="112.6" x2="944.4" y2="112.6" stroke="#8f7d3d" stroke-opacity="0.13" stroke-width="1"/>
<line x1="807.0" y1="401.0" x2="1080.0" y2="401.0" stroke="#52a552" stroke-opacity="0.32" stroke-width="1.3"/>
<line x1="845.0" y1="519.0" x2="1080.0" y2="519.0" stroke="#52a552" stroke-opacity="0.3" stroke-width="1.3"/>
<line x1="820.0" y1="557.0" x2="1080.0" y2="557.0" stroke="#8f7d3d" stroke-opacity="0.2" stroke-width="1.1"/>
<line x1="820.0" y1="617.0" x2="952.0" y2="617.0" stroke="#52a552" stroke-opacity="0.18" stroke-width="1"/>
<line x1="857.0" y1="465.0" x2="857.0" y2="645.0" stroke="#8f7d3d" stroke-opacity="0.3" stroke-width="1.2"/>
<line x1="942.0" y1="465.0" x2="942.0" y2="645.0" stroke="#8f7d3d" stroke-opacity="0.3" stroke-width="1.2"/>
<line x1="1063.0" y1="380.0" x2="1063.0" y2="430.0" stroke="#52a552" stroke-opacity="0.3" stroke-width="1.1"/>
<line x1="1063.0" y1="430.0" x2="1080.0" y2="430.0" stroke="#52a552" stroke-opacity="0.3" stroke-width="1.1"/>
<rect x="1000" y="430" width="80" height="120" rx="0" fill="none" stroke="#52a552" stroke-opacity="0.18" stroke-width="1"/>
<circle cx="909" cy="412" r="39" fill="none" stroke="#52a552" stroke-opacity="0.25" stroke-width="1.4"/>
<circle cx="941" cy="492" r="15" fill="none" stroke="#52a552" stroke-opacity="0.2" stroke-width="1.2"/>
<circle cx="941" cy="492" r="9" fill="none" stroke="#52a552" stroke-opacity="0.2" stroke-width="1.2"/>
<rect x="957" y="405" width="9" height="10" rx="2" fill="none" stroke="#52a552" stroke-opacity="0.22" stroke-width="1.2"/>
<rect x="957" y="419" width="9" height="10" rx="2" fill="none" stroke="#52a552" stroke-opacity="0.22" stroke-width="1.2"/>
<rect x="957" y="433" width="9" height="10" rx="2" fill="none" stroke="#52a552" stroke-opacity="0.22" stroke-width="1.2"/>
<rect x="957" y="447" width="9" height="10" rx="2" fill="none" stroke="#52a552" stroke-opacity="0.22" stroke-width="1.2"/>
<rect x="957" y="461" width="9" height="10" rx="2" fill="none" stroke="#52a552" stroke-opacity="0.22" stroke-width="1.2"/>
<rect x="957" y="475" width="9" height="10" rx="2" fill="none" stroke="#52a552" stroke-opacity="0.22" stroke-width="1.2"/>
<rect x="957" y="489" width="9" height="10" rx="2" fill="none" stroke="#52a552" stroke-opacity="0.22" stroke-width="1.2"/>
<rect x="957" y="503" width="9" height="10" rx="2" fill="none" stroke="#52a552" stroke-opacity="0.22" stroke-width="1.2"/>
<rect x="872" y="594" width="16" height="12" rx="1" fill="none" stroke="#52a552" stroke-opacity="0.2" stroke-width="1"/>
<rect x="865" y="597" width="6" height="6" rx="1" fill="none" stroke="#52a552" stroke-opacity="0.18" stroke-width="1"/>
<rect x="889" y="597" width="6" height="6" rx="1" fill="none" stroke="#52a552" stroke-opacity="0.18" stroke-width="1"/>
<rect x="917" y="594" width="16" height="12" rx="1" fill="none" stroke="#52a552" stroke-opacity="0.2" stroke-width="1"/>
<rect x="910" y="597" width="6" height="6" rx="1" fill="none" stroke="#52a552" stroke-opacity="0.18" stroke-width="1"/>
<rect x="934" y="597" width="6" height="6" rx="1" fill="none" stroke="#52a552" stroke-opacity="0.18" stroke-width="1"/>
<rect x="982" y="564" width="16" height="12" rx="1" fill="none" stroke="#52a552" stroke-opacity="0.2" stroke-width="1"/>
<rect x="975" y="567" width="6" height="6" rx="1" fill="none" stroke="#52a552" stroke-opacity="0.18" stroke-width="1"/>
<rect x="999" y="567" width="6" height="6" rx="1" fill="none" stroke="#52a552" stroke-opacity="0.18" stroke-width="1"/>
<rect x="872" y="514" width="16" height="12" rx="1" fill="none" stroke="#52a552" stroke-opacity="0.2" stroke-width="1"/>
<rect x="865" y="517" width="6" height="6" rx="1" fill="none" stroke="#52a552" stroke-opacity="0.18" stroke-width="1"/>
<rect x="889" y="517" width="6" height="6" rx="1" fill="none" stroke="#52a552" stroke-opacity="0.18" stroke-width="1"/>
<rect x="992" y="594" width="16" height="12" rx="1" fill="none" stroke="#52a552" stroke-opacity="0.2" stroke-width="1"/>
<rect x="985" y="597" width="6" height="6" rx="1" fill="none" stroke="#52a552" stroke-opacity="0.18" stroke-width="1"/>
<rect x="1009" y="597" width="6" height="6" rx="1" fill="none" stroke="#52a552" stroke-opacity="0.18" stroke-width="1"/>
<line x1="886.0" y1="293.0" x2="1010.0" y2="293.0" stroke="#8f7d3d" stroke-opacity="0.25" stroke-width="1.1"/>
<line x1="1062.0" y1="0.0" x2="1062.0" y2="671.0" stroke="#52a552" stroke-opacity="0.22" stroke-width="1.1"/>
<path d="M750 344 L782 318.4 L814 344 L782 369.6 Z" fill="none" stroke="#52a552" stroke-opacity="0.14" stroke-width="1.2"/>
<path d="M758 344 L782 324.8 L806 344 L782 363.2 Z" fill="none" stroke="#52a552" stroke-opacity="0.14" stroke-width="1.2"/>
<circle cx="782" cy="330" r="75" fill="none" stroke="#52a552" stroke-opacity="0.08" stroke-width="1"/>
<rect x="857" y="312" width="45" height="25" rx="0" fill="none" stroke="#52a552" stroke-opacity="0.22999999999999998" stroke-width="1"/>
<line x1="857.0" y1="312.0" x2="857.0" y2="312.0" stroke="#52a552" stroke-opacity="0.18" stroke-width="1"/>
<line x1="857.0" y1="316.0" x2="861.0" y2="312.0" stroke="#52a552" stroke-opacity="0.18" stroke-width="1"/>
<line x1="857.0" y1="320.0" x2="865.0" y2="312.0" stroke="#52a552" stroke-opacity="0.18" stroke-width="1"/>
<line x1="857.0" y1="324.0" x2="869.0" y2="312.0" stroke="#52a552" stroke-opacity="0.18" stroke-width="1"/>
<line x1="857.0" y1="328.0" x2="873.0" y2="312.0" stroke="#52a552" stroke-opacity="0.18" stroke-width="1"/>
<line x1="857.0" y1="332.0" x2="877.0" y2="312.0" stroke="#52a552" stroke-opacity="0.18" stroke-width="1"/>
<line x1="857.0" y1="336.0" x2="881.0" y2="312.0" stroke="#52a552" stroke-opacity="0.18" stroke-width="1"/>
<line x1="860.0" y1="337.0" x2="885.0" y2="312.0" stroke="#52a552" stroke-opacity="0.18" stroke-width="1"/>
<line x1="864.0" y1="337.0" x2="889.0" y2="312.0" stroke="#52a552" stroke-opacity="0.18" stroke-width="1"/>
<line x1="868.0" y1="337.0" x2="893.0" y2="312.0" stroke="#52a552" stroke-opacity="0.18" stroke-width="1"/>
<line x1="872.0" y1="337.0" x2="897.0" y2="312.0" stroke="#52a552" stroke-opacity="0.18" stroke-width="1"/>
<line x1="876.0" y1="337.0" x2="901.0" y2="312.0" stroke="#52a552" stroke-opacity="0.18" stroke-width="1"/>
<line x1="880.0" y1="337.0" x2="902.0" y2="315.0" stroke="#52a552" stroke-opacity="0.18" stroke-width="1"/>
<line x1="884.0" y1="337.0" x2="902.0" y2="319.0" stroke="#52a552" stroke-opacity="0.18" stroke-width="1"/>
<line x1="888.0" y1="337.0" x2="902.0" y2="323.0" stroke="#52a552" stroke-opacity="0.18" stroke-width="1"/>
<line x1="892.0" y1="337.0" x2="902.0" y2="327.0" stroke="#52a552" stroke-opacity="0.18" stroke-width="1"/>
<line x1="896.0" y1="337.0" x2="902.0" y2="331.0" stroke="#52a552" stroke-opacity="0.18" stroke-width="1"/>
<line x1="900.0" y1="337.0" x2="902.0" y2="335.0" stroke="#52a552" stroke-opacity="0.18" stroke-width="1"/>
<rect x="807" y="409" width="38" height="27" rx="0" fill="none" stroke="#52a552" stroke-opacity="0.19" stroke-width="1"/>
<line x1="807.0" y1="409.0" x2="807.0" y2="409.0" stroke="#52a552" stroke-opacity="0.14" stroke-width="1"/>
<line x1="807.0" y1="413.0" x2="811.0" y2="409.0" stroke="#52a552" stroke-opacity="0.14" stroke-width="1"/>
<line x1="807.0" y1="417.0" x2="815.0" y2="409.0" stroke="#52a552" stroke-opacity="0.14" stroke-width="1"/>
<line x1="807.0" y1="421.0" x2="819.0" y2="409.0" stroke="#52a552" stroke-opacity="0.14" stroke-width="1"/>
<line x1="807.0" y1="425.0" x2="823.0" y2="409.0" stroke="#52a552" stroke-opacity="0.14" stroke-width="1"/>
<line x1="807.0" y1="429.0" x2="827.0" y2="409.0" stroke="#52a552" stroke-opacity="0.14" stroke-width="1"/>
<line x1="807.0" y1="433.0" x2="831.0" y2="409.0" stroke="#52a552" stroke-opacity="0.14" stroke-width="1"/>
<line x1="808.0" y1="436.0" x2="835.0" y2="409.0" stroke="#52a552" stroke-opacity="0.14" stroke-width="1"/>
<line x1="812.0" y1="436.0" x2="839.0" y2="409.0" stroke="#52a552" stroke-opacity="0.14" stroke-width="1"/>
<line x1="816.0" y1="436.0" x2="843.0" y2="409.0" stroke="#52a552" stroke-opacity="0.14" stroke-width="1"/>
<line x1="820.0" y1="436.0" x2="845.0" y2="411.0" stroke="#52a552" stroke-opacity="0.14" stroke-width="1"/>
<line x1="824.0" y1="436.0" x2="845.0" y2="415.0" stroke="#52a552" stroke-opacity="0.14" stroke-width="1"/>
<line x1="828.0" y1="436.0" x2="845.0" y2="419.0" stroke="#52a552" stroke-opacity="0.14" stroke-width="1"/>
<line x1="832.0" y1="436.0" x2="845.0" y2="423.0" stroke="#52a552" stroke-opacity="0.14" stroke-width="1"/>
<line x1="836.0" y1="436.0" x2="845.0" y2="427.0" stroke="#52a552" stroke-opacity="0.14" stroke-width="1"/>
<line x1="840.0" y1="436.0" x2="845.0" y2="431.0" stroke="#52a552" stroke-opacity="0.14" stroke-width="1"/>
<line x1="844.0" y1="436.0" x2="845.0" y2="435.0" stroke="#52a552" stroke-opacity="0.14" stroke-width="1"/>
<rect x="962" y="402" width="7" height="10" rx="2" fill="none" stroke="#52a552" stroke-opacity="0.22" stroke-width="1"/>
<rect x="973" y="402" width="7" height="10" rx="2" fill="none" stroke="#52a552" stroke-opacity="0.22" stroke-width="1"/>
<rect x="984" y="402" width="7" height="10" rx="2" fill="none" stroke="#52a552" stroke-opacity="0.22" stroke-width="1"/>
<rect x="995" y="402" width="7" height="10" rx="2" fill="none" stroke="#52a552" stroke-opacity="0.22" stroke-width="1"/>
<rect x="1006" y="402" width="7" height="10" rx="2" fill="none" stroke="#52a552" stroke-opacity="0.22" stroke-width="1"/>
<rect x="1017" y="402" width="7" height="10" rx="2" fill="none" stroke="#52a552" stroke-opacity="0.22" stroke-width="1"/>
<path d="M905 520 C900 480 905 440 925 420 C940 405 958 420 950 440 C945 452 930 450 928 440 C926 430 940 428 942 436" fill="none" stroke="#52a552" stroke-opacity="0.25" stroke-width="1.3"/>
<circle cx="930" cy="432" r="6" fill="none" stroke="#52a552" stroke-opacity="0.2" stroke-width="1.1"/>
<line x1="754.0" y1="557.5" x2="860.0" y2="557.5" stroke="#52a552" stroke-opacity="0.16" stroke-width="1"/>
<line x1="711.0" y1="538.5" x2="860.0" y2="538.5" stroke="#52a552" stroke-opacity="0.1" stroke-width="1"/>
<rect x="770" y="641" width="34" height="8" rx="4" fill="none" stroke="#8f7d3d" stroke-opacity="0.45" stroke-width="1.5"/>
<line x1="770.0" y1="645.0" x2="860.0" y2="645.0" stroke="#8f7d3d" stroke-opacity="0.2" stroke-width="1"/>
<line x1="785.0" y1="650.0" x2="797.0" y2="671.0" stroke="#52a552" stroke-opacity="0.15" stroke-width="1"/>
</g>
 <rect x="0" y="665" width="1080" height="6" fill="url(#pshadow)"/>
 <defs><linearGradient id="pshadow" x1="0" y1="0" x2="0" y2="1"><stop offset="0" stop-color="#000" stop-opacity="0"/><stop offset="1" stop-color="#000" stop-opacity="0.7"/></linearGradient></defs>
</svg>

<!-- desktop icons -->
<svg class="abs" width="200" height="70" viewBox="0 0 200 70">
 <defs>
  <linearGradient id="fg" x1="0" y1="0" x2="0" y2="1">
   <stop offset="0" stop-color="#72c3ef"/><stop offset="1" stop-color="#3daee9"/>
  </linearGradient>
 </defs>
 <g id="fold">
  <path d="M26 14 H50 L54 18 H82 V40 H26 Z" fill="#1b7fba"/>
  <path d="M25 28 H44 L48.5 24 H83 V66 H25 Z" fill="url(#fg)"/>
  <rect x="25" y="65" width="58" height="1" fill="#2a8fc8"/>
 </g>
 <g fill="none" stroke="#1f7ab5" stroke-width="1">
  <path d="M44.5 45.5 L54 35.8 L63.5 45.5 M46.5 43.5 V54.5 H61.5 V43.5 M59.5 37 V41"/>
  <rect x="52" y="48" width="4" height="6.5" fill="#1f7ab5" stroke="none"/>
 </g>
 <use href="#fold" x="108"/>
 <g fill="none" stroke="#1f7ab5" stroke-width="1">
  <path d="M152 37.5 H172 M159.5 37.5 V35.5 H164.5 V37.5 M154.5 37.5 V54.5 H169.5 V37.5 M159.5 42 V49.5 M164.5 42 V49.5"/>
 </g>
</svg>
<div class="lbl" style="left:4px;top:78px">Home</div>
<div class="lbl" style="left:112px;top:78px">Trash</div>

<!-- toolbox -->
<div style="position:absolute;left:1050px;top:0;width:30px;height:30px;background:rgba(200,215,210,.42);border-radius:0 0 0 2px"></div>
<svg class="abs" style="left:1059px;top:10px" width="13" height="11" viewBox="0 0 13 11"><path d="M0 1H12M0 5H12M0 9H12" stroke="#4a4f4f" stroke-width="1.8"/></svg>

<div id="menu">
 <div class="t" style="left:27px;top:6px">Create New</div>
 <div class="sep" style="top:29px"></div>
 <div class="t" style="left:27px;top:39px">Icons</div>
 <div class="t dis" style="left:27px;top:65px">Paste</div>
 <div class="t dis" style="left:27px;top:91px">Undo</div>
 <div class="t" style="left:27px;top:117px">Refresh Desktop</div>
 <div class="sep" style="top:140px"></div>
 <div class="t" style="left:27px;top:150px">Run Command...</div><div class="k" style="right:26px;top:150px">Alt+Space</div>
 <div class="t" style="left:27px;top:176px">Add Widgets...</div><div class="k" style="right:26px;top:176px">Alt+D, A</div>
 <div class="t" style="left:27px;top:202px">Add Panel</div>
 <div class="t" style="left:27px;top:228px">Activities...</div><div class="k" style="right:26px;top:228px">Alt+D, Alt+A</div>
 <div class="t" style="left:27px;top:254px">Lock Widgets</div><div class="k" style="right:26px;top:254px">Alt+D, L</div>
 <div class="sep" style="top:277px"></div>
 <div class="t" style="left:27px;top:287px">Lock Screen</div><div class="k" style="right:26px;top:287px">Ctrl+Alt+L</div>
 <div class="t" style="left:27px;top:313px">Leave...</div><div class="k" style="right:26px;top:313px">Ctrl+Alt+Del</div>
 <div class="sep" style="top:336px"></div>
 <div class="t" style="left:27px;top:346px">Open with Dolphin</div><div class="k" style="right:26px;top:346px">Alt+D, T</div>
 <div class="t" style="left:27px;top:372px">Configure Desktop</div><div class="k" style="right:26px;top:372px">Alt+D, Alt+S</div>
</div>

<!-- menu icons, page coordinates -->
<svg class="abs" width="1080" height="701" viewBox="0 0 1080 701" style="pointer-events:none">
 <g fill="none" stroke="#232627" stroke-width="1" stroke-linecap="round" stroke-linejoin="round">
  <!-- submenu arrows -->
  <path d="M693.5 280.5 L697.5 285 L693.5 289.5"/>
  <path d="M693.5 313.5 L697.5 318 L693.5 322.5"/>
  <path d="M693.5 476.5 L697.5 481 L693.5 485.5"/>
 </g>
 <!-- create new doc -->
 <path d="M459.5 279.5 H468.5 V287 L465 290.5 H459.5 Z" fill="#fcfcfc" stroke="#232627" stroke-width="1"/>
 <path d="M465 290.5 V287 H468.5 Z" fill="#232627"/>
 <!-- icons view -->
 <rect x="456" y="311" width="16" height="14" fill="#fcfcfc"/>
 <rect x="456" y="311" width="16" height="2" fill="#3b4046"/>
 <rect x="456" y="313" width="16" height="1" fill="#7fc4ec"/>
 <rect x="456" y="324" width="16" height="1" fill="#a0a4a8"/>
 <rect x="458" y="315" width="4" height="3" fill="#5a9ee0"/>
 <rect x="458" y="320" width="4" height="3" fill="#5a9ee0"/>
 <rect x="463" y="315" width="3" height="3" fill="#f47b2a"/>
 <rect x="463" y="320" width="3" height="3" fill="#4cb33a"/>
 <rect x="467" y="315" width="3" height="4" fill="#2d4a5a"/>
 <!-- paste -->
 <g fill="none" stroke="#8e9091" stroke-width="1">
  <rect x="459.5" y="339.5" width="9" height="10"/>
  <path d="M461.5 343.5 H466.5 M461.5 346.5 H464.5"/>
 </g>
 <rect x="461" y="338" width="6" height="3" fill="#8e9091"/>
 <!-- undo -->
 <path d="M462.7 364.5 L459.5 367.5 L462.7 370.5 M459.5 367.5 H465 A4 4 0 0 1 465 375.5 H463.5" fill="none" stroke="#8e9091" stroke-width="1.1" stroke-linecap="round" stroke-linejoin="round"/>
 <!-- refresh desktop -->
 <rect x="458.5" y="390.5" width="11" height="11" fill="#fcfcfc" stroke="#232627"/>
 <path d="M460.5 398.5 H467.5" stroke="#232627"/>
 <!-- run command -->
 <rect x="458.5" y="423.5" width="11" height="11" fill="#fcfcfc" stroke="#232627"/>
 <rect x="458" y="423" width="12" height="3" fill="#232627"/>
 <path d="M462 427.5 L466 430 L462 432.5 Z" fill="#232627"/>
 <!-- plus x2 -->
 <path d="M458.5 455.5 H468.5 M463.5 450.5 V460.5 M458.5 481.5 H468.5 M463.5 476.5 V486.5" stroke="#232627" stroke-width="1"/>
 <!-- activities dots -->
 <g fill="none" stroke="#232627" stroke-width="1.1">
  <circle cx="459.5" cy="506.5" r="1.2"/><circle cx="463.5" cy="506.5" r="1.2"/><circle cx="467.5" cy="506.5" r="1.2"/>
 </g>
 <!-- locks -->
 <g id="lock">
  <path d="M461.5 533 V530.5 A2.5 2.5 0 0 1 466.5 530.5 V533" fill="none" stroke="#232627" stroke-width="1.1"/>
  <rect x="459" y="533" width="10" height="6" fill="#232627"/>
 </g>
 <use href="#lock" y="33"/>
 <!-- leave -->
 <path d="M467.5 586.5 L461.5 592.5 L467.5 598.5" fill="none" stroke="#232627" stroke-width="1.1"/>
 <!-- dolphin folder -->
 <path d="M456 617 H464 L466 619.5 H472 V625 H456 Z" fill="#1b6fa8"/>
 <rect x="457" y="621" width="14" height="1.2" fill="#ffffff"/>
 <rect x="456" y="623" width="16" height="10" fill="#3b8fe0"/>
 <!-- configure desktop -->
 <rect x="458.5" y="645.5" width="11" height="11" fill="#fcfcfc" stroke="#232627"/>
 <rect x="458" y="645" width="12" height="3" fill="#232627"/>
 <rect x="460" y="649" width="2" height="6" fill="#232627"/>
 <path d="M463.5 650.5 H468 M463.5 653.5 H468" stroke="#232627"/>
</svg>

<div id="panel">
 <div style="position:absolute;left:0;top:0;width:1080px;height:1px;background:#e2e5e6"></div>
</div>
<svg class="abs" style="top:671px" width="1080" height="30" viewBox="0 671 1080 30">
 <!-- opensuse logo -->
 <circle cx="14.95" cy="685.9" r="10.1" fill="none" stroke="#232627" stroke-width="1.5"/>
 <path d="M5 682.5 L8 679.8 C11.5 679.6 15.5 679.8 18.8 680.9 C21.3 681.8 22.9 683.2 22.9 685 C22.7 686.6 21.5 687.2 20 687.3 C21.3 687.7 22.4 688.1 22.9 688.6 C20.5 690.6 14.5 691.6 7.2 691.9 L5.2 691 Z" fill="#232627"/>
 <path d="M10.8 685.8 C13.5 688.3 17.5 689.2 22.2 688.5" fill="none" stroke="#d7dcde" stroke-width="1"/>
 <circle cx="17.9" cy="683.8" r="2.5" fill="#232627" stroke="#d7dcde" stroke-width="0.9"/>
 <circle cx="18.3" cy="683.4" r="0.7" fill="#9a9d9f"/>
 <!-- pager -->
 <rect x="33" y="672" width="20" height="13" fill="#7bc0e6"/>
 <rect x="33" y="686" width="20" height="13" fill="#c5cacb"/>
 <!-- clipboard -->
 <g fill="none" stroke="#232627" stroke-width="1.3">
  <path d="M812 680.5 H809.7 V693 H822.3 V680.5 H820"/>
  <path d="M812 684.5 H820 M812 687.5 H818 M812 690.5 H815"/>
 </g>
 <rect x="812" y="678" width="8" height="4.5" fill="#232627"/>
 <!-- usb -->
 <rect x="838" y="678" width="8" height="8" fill="#232627"/>
 <rect x="840" y="680" width="1" height="3.5" fill="#d7dcde"/>
 <rect x="843" y="680" width="1" height="3.5" fill="#d7dcde"/>
 <rect x="841.5" y="681.5" width="1" height="1" fill="#d7dcde"/>
 <rect x="837.6" y="686.6" width="8.8" height="6.8" fill="none" stroke="#232627" stroke-width="1.2"/>
 <path d="M839.5 691.5 H844.5" stroke="#232627" stroke-width="1"/>
 <!-- network -->
 <g fill="none" stroke="#232627">
  <path d="M864.5 678.5 H875.5 V690 H864.5" stroke-width="1"/>
  <rect x="860.5" y="678.5" width="4" height="5" stroke-width="1"/>
  <path d="M862.5 684 V692.5 H866" stroke-width="1"/>
 </g>
 <rect x="864" y="689.3" width="12" height="1.6" fill="#232627"/>
 <rect x="866.5" y="690.5" width="5" height="2.6" fill="#232627"/>
 <rect x="865" y="693" width="8" height="1.2" fill="#232627"/>
 <rect x="860" y="685" width="1" height="4" fill="#232627"/>
 <!-- battery -->
 <rect x="884.5" y="680.5" width="18" height="11" fill="none" stroke="#232627" stroke-width="1.2"/>
 <path d="M886 682.3 H898 L900.2 689.7 H886 Z" fill="#232627"/>
 <rect x="902.5" y="684" width="1.8" height="3.5" fill="#232627"/>
 <!-- volume -->
 <rect x="912" y="683" width="2" height="6" fill="#232627"/>
 <path d="M915 683 L921 677.8 V694 L915 689 Z" fill="#232627"/>
 <path d="M922.8 682.5 A4 4 0 0 1 922.8 689.5" fill="none" stroke="#232627" stroke-width="1.2"/>
 <path d="M923.5 679.5 A6.5 6.5 0 0 1 923.5 692.5" fill="none" stroke="#9a9d9f" stroke-width="0.9"/>
 <!-- up arrow -->
 <path d="M940 688.8 L946.1 682.4 L952.2 688.8 Z" fill="#232627"/>
 <!-- hamburger -->
 <path d="M1058 682 H1070 M1058 686.2 H1070 M1058 690.4 H1070" stroke="#7a7d7f" stroke-width="1.4"/>
</svg>
<div id="clock">2:21 PM</div>
</body></html>
